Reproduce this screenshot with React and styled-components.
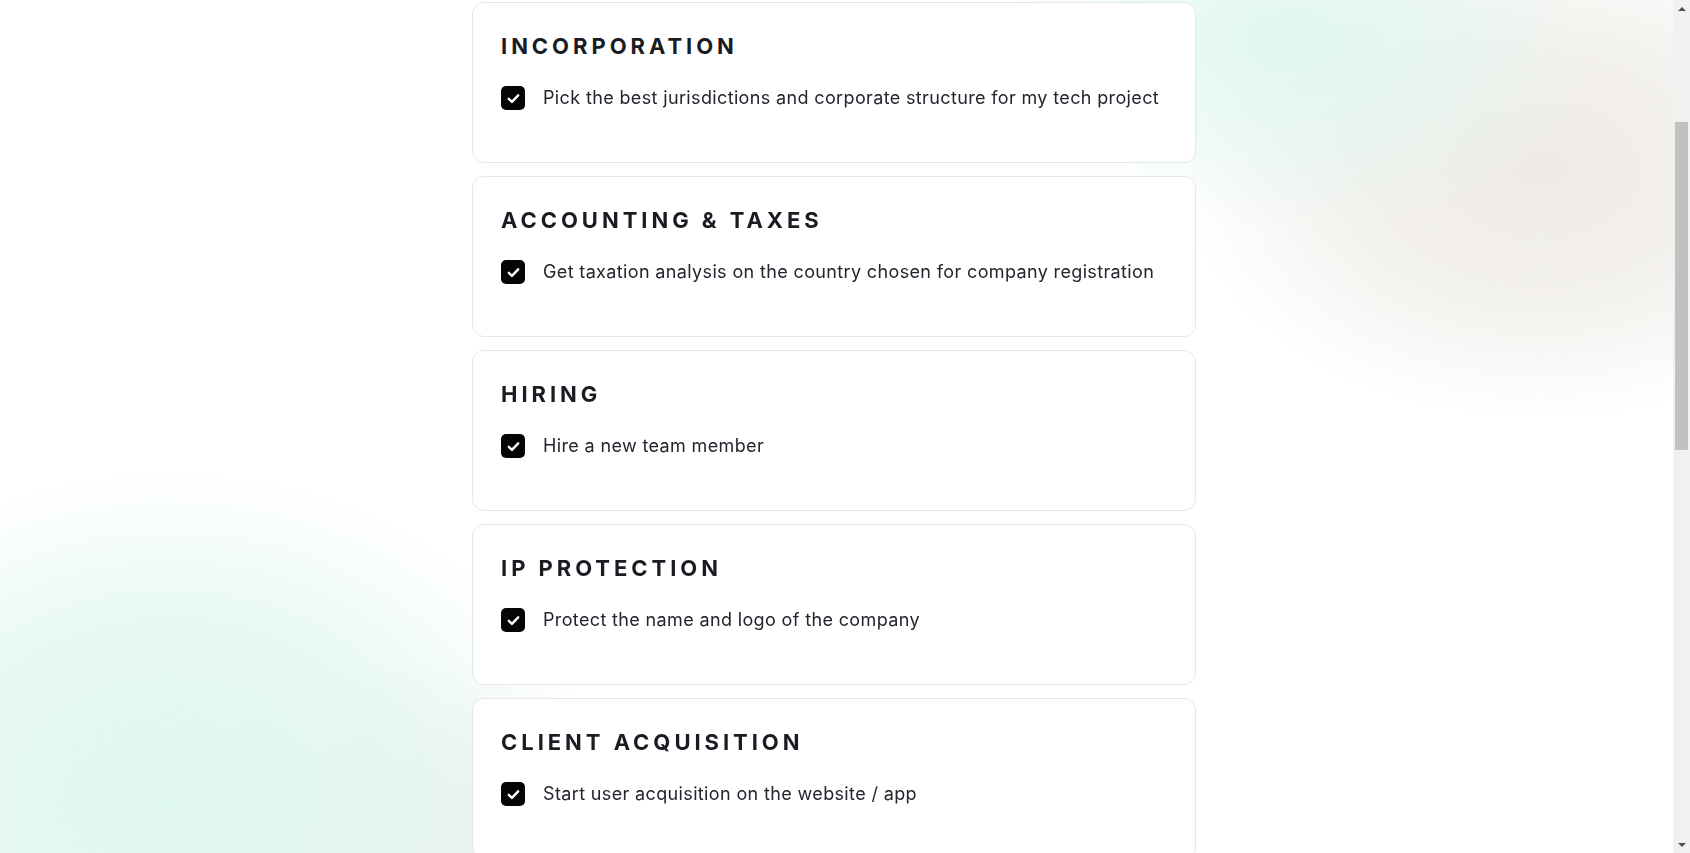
import React, { useLayoutEffect } from 'react'
import styled, { createGlobalStyle } from 'styled-components'

const GlobalStyle = createGlobalStyle`
  html, body {
    margin: 0;
    padding: 0;
    background: #ffffff;
    font-family: Inter, "Noto Sans", sans-serif;
    color: #1d1d27;
  }
  * { box-sizing: border-box; }
`

const sections = [
  { title: 'Incorporation', item: 'Pick the best jurisdictions and corporate structure for my tech project' },
  { title: 'Accounting & Taxes', item: 'Get taxation analysis on the country chosen for company registration' },
  { title: 'Hiring', item: 'Hire a new team member' },
  { title: 'IP Protection', item: 'Protect the name and logo of the company' },
  { title: 'Client Acquisition', item: 'Start user acquisition on the website / app' },
]

const Check = () => (
  <svg width="15" height="15" viewBox="0 0 24 24" fill="none" stroke="#fff" strokeWidth="3.8" strokeLinecap="round" strokeLinejoin="round">
    <path d="M4.5 12.5l5 5L19.5 7" />
  </svg>
)

function App() {
  // the reference is taken a bit down the page
  useLayoutEffect(() => {
    window.scrollTo(0, 273)
  }, [])

  return (
    <>
      <GlobalStyle />
      <Backdrop />
      <Page>
        <List>
          {sections.map((s) => (
            <Card key={s.title}>
              <Title>{s.title}</Title>
              <Row>
                <Box><Check /></Box>
                <Label>{s.item}</Label>
              </Row>
            </Card>
          ))}
        </List>
      </Page>
      <Scrollbar>
        <Arrow $up />
        <Track>
          <Thumb />
        </Track>
        <Arrow />
      </Scrollbar>
    </>
  )
}

const Backdrop = styled.div`
  position: fixed;
  inset: 0;
  z-index: 0;
  pointer-events: none;
  background:
    radial-gradient(ellipse 300px 190px at 1290px 40px, rgba(222, 246, 239, 0.95) 0%, rgba(222, 246, 239, 0.5) 55%, rgba(222, 246, 239, 0) 100%),
    radial-gradient(ellipse 360px 250px at 1540px 170px, rgba(238, 235, 229, 1) 0%, rgba(239, 236, 231, 0.75) 50%, rgba(245, 242, 239, 0) 100%),
    radial-gradient(ellipse 420px 330px at 170px 800px, rgba(222, 247, 240, 1) 0%, rgba(224, 246, 239, 0.75) 55%, rgba(226, 246, 240, 0) 100%),
    radial-gradient(ellipse 280px 210px at 430px 870px, rgba(238, 238, 232, 1) 0%, rgba(239, 238, 233, 0.65) 50%, rgba(239, 238, 233, 0) 100%);
`

const Page = styled.div`
  position: relative;
  z-index: 1;
  padding: 275px 0 0 472px;
  min-height: 2130px;
`

const List = styled.div`
  width: 724px;
  display: flex;
  flex-direction: column;
  gap: 13px;
`

const Card = styled.section`
  height: 161px;
  padding: 30px 28px 0;
  background: #ffffff;
  border: 1px solid #e6e6ee;
  border-radius: 12px;
`

const Title = styled.h2`
  margin: 0;
  font-size: 22px;
  line-height: 26px;
  font-weight: 700;
  letter-spacing: 0.18em;
  text-transform: uppercase;
  color: #1b1b24;
`

const Row = styled.div`
  display: flex;
  align-items: center;
  gap: 18px;
  margin-top: 27px;
`

const Box = styled.span`
  flex: none;
  width: 24px;
  height: 24px;
  border-radius: 5px;
  background: #050505;
  display: flex;
  align-items: center;
  justify-content: center;
`

const Label = styled.span`
  font-size: 18px;
  line-height: 24px;
  font-weight: 400;
  letter-spacing: 0.02em;
  color: #24242e;
`

const Scrollbar = styled.div`
  position: fixed;
  top: 0;
  right: 0;
  bottom: 0;
  width: 17px;
  z-index: 2;
  background: #f1f1f1;
  display: flex;
  flex-direction: column;
`

const Arrow = styled.div`
  height: 17px;
  flex: none;
  display: flex;
  align-items: center;
  justify-content: center;
  &::before {
    content: '';
    border-left: 4px solid transparent;
    border-right: 4px solid transparent;
    ${(p) => (p.$up ? 'border-bottom: 4px solid #505050;' : 'border-top: 4px solid #505050;')}
  }
`

const Track = styled.div`
  flex: 1;
  padding: 105px 2px 0;
`

const Thumb = styled.div`
  height: 328px;
  background: #c1c1c1;
`

export default App
